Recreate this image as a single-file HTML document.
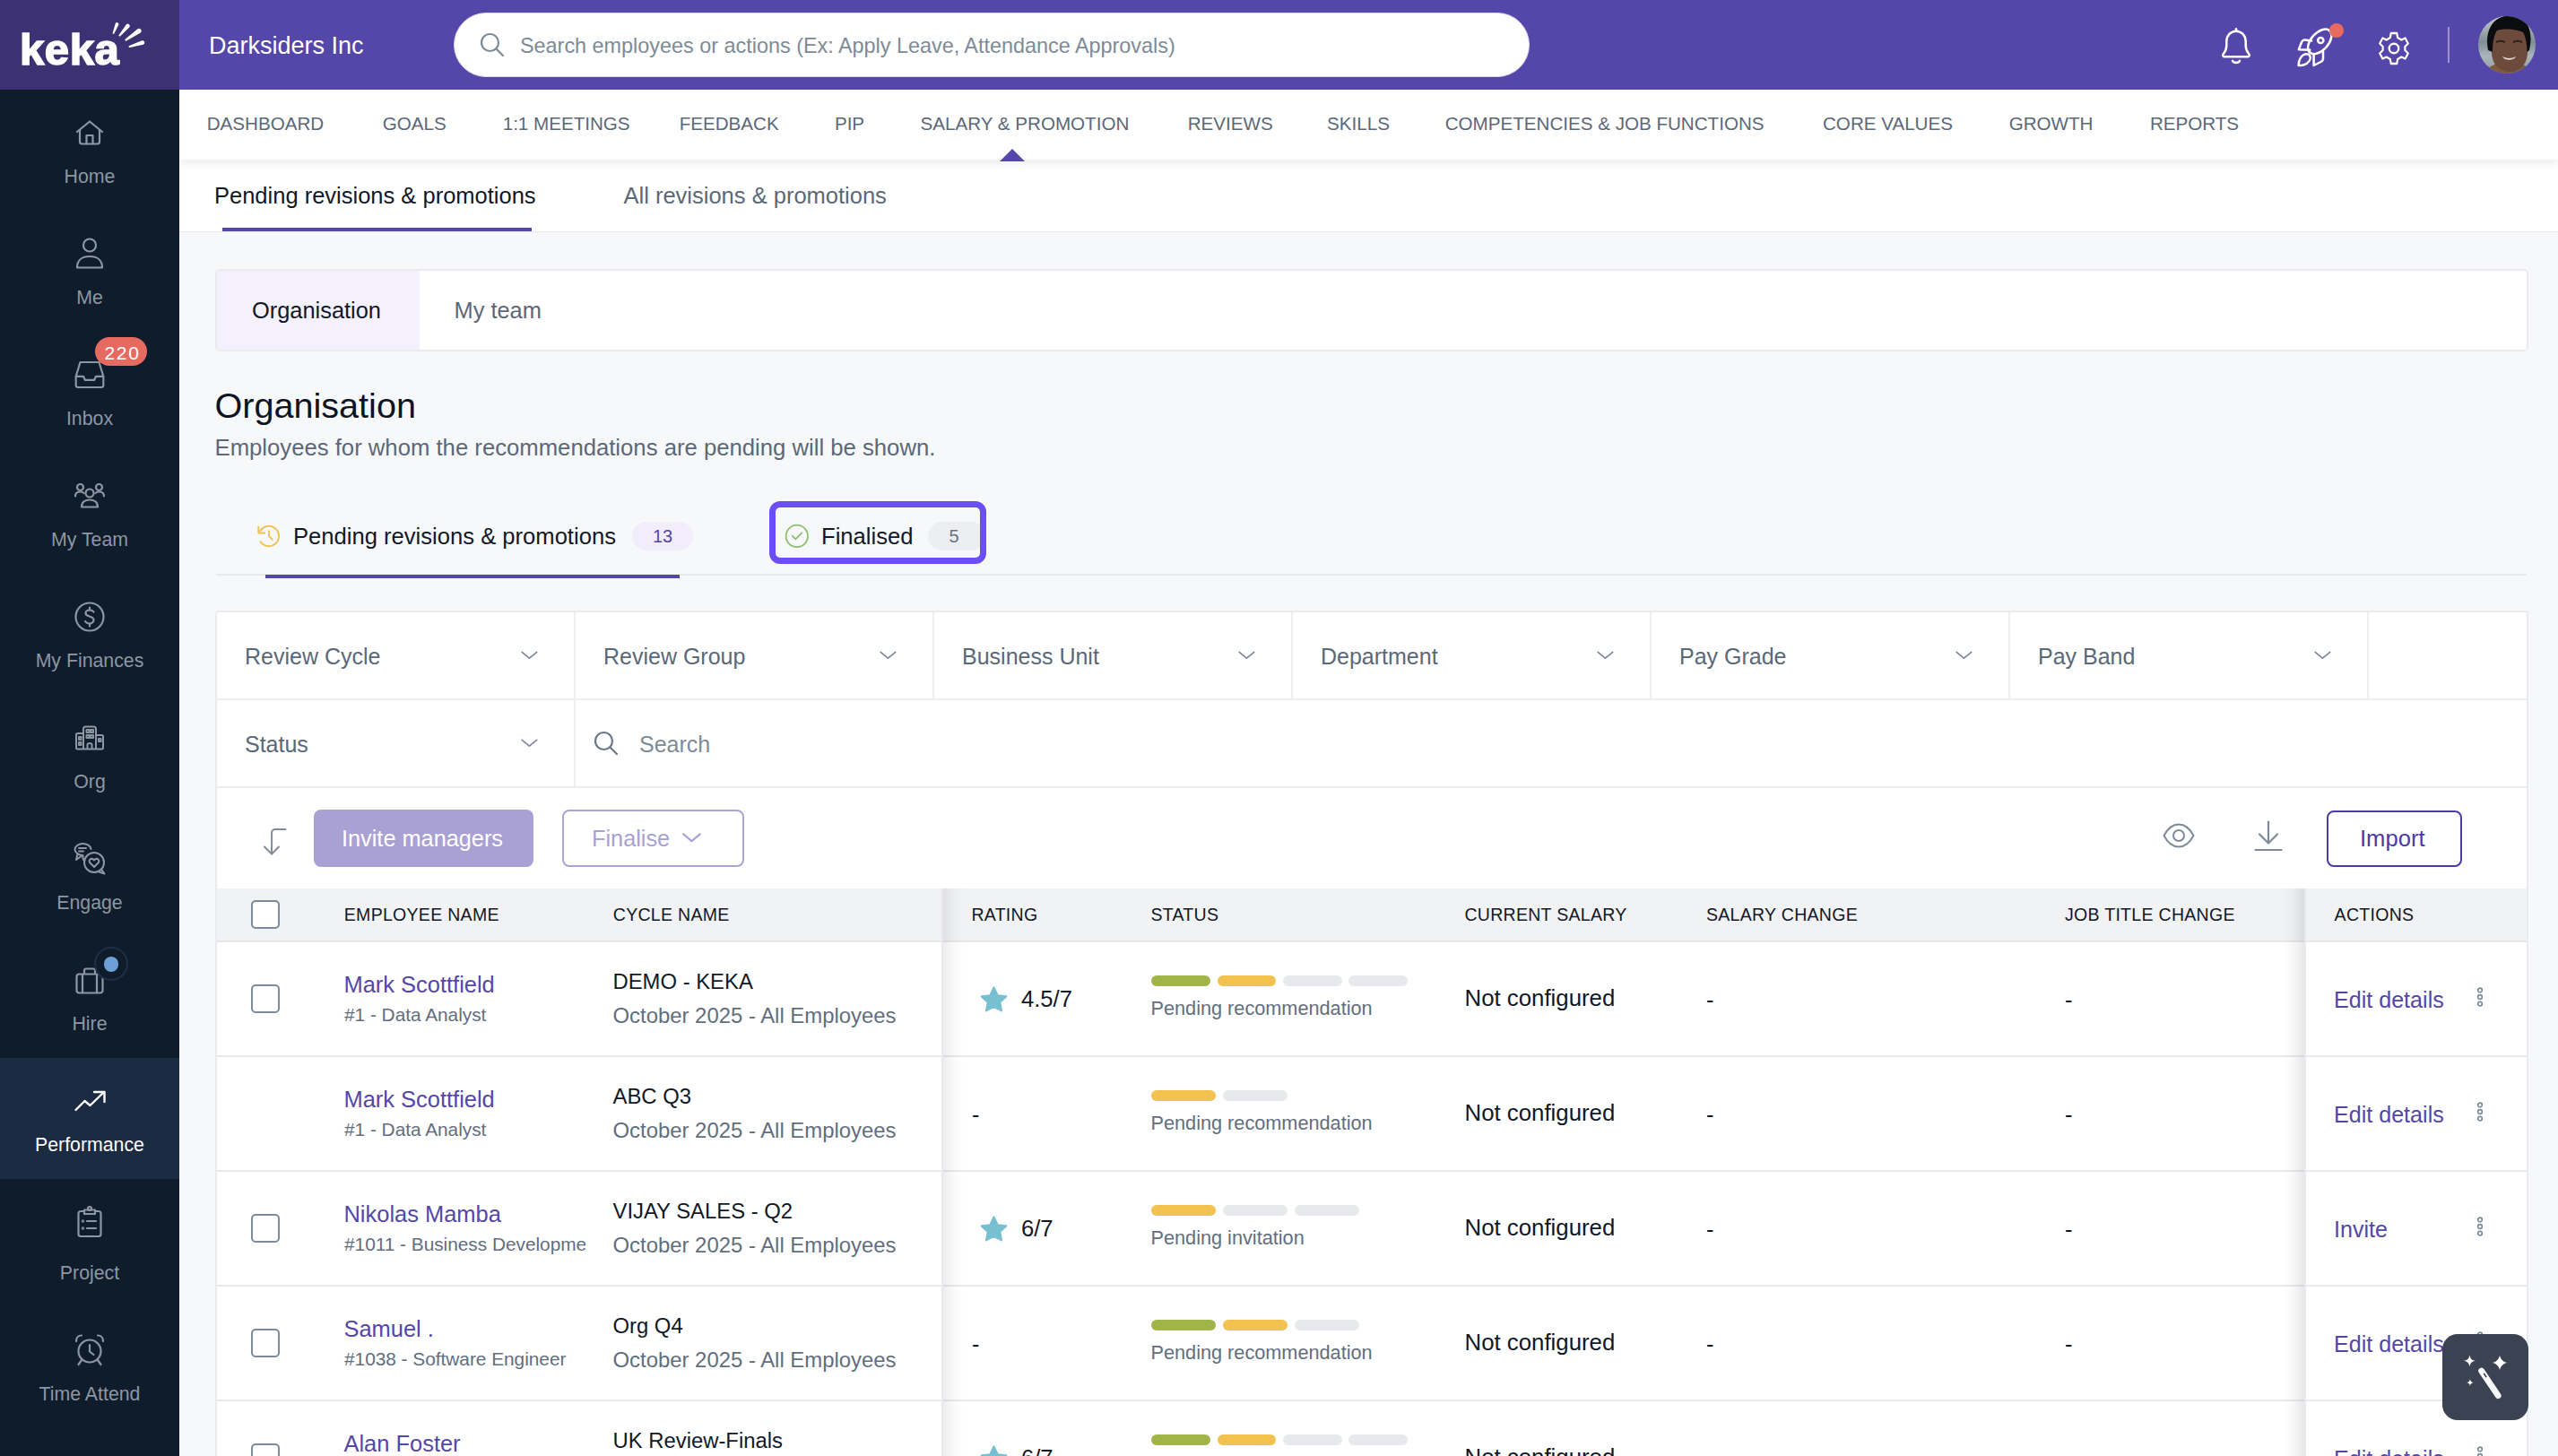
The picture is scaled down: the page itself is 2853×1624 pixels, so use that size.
<!DOCTYPE html>
<html><head><meta charset="utf-8"><title>Keka</title>
<style>
html,body{margin:0;padding:0;}
body{width:2853px;height:1624px;position:relative;overflow:hidden;background:#f7f8fa;font-family:"Liberation Sans", sans-serif;}
.t{position:absolute;white-space:nowrap;line-height:1;}
svg{overflow:visible}
</style></head><body>
<div style="position:absolute;left:0px;top:0px;width:200px;height:100px;background:#3c3173"></div>
<div style="position:absolute;left:200px;top:0px;width:2653px;height:100px;background:#5546a9"></div>
<div class="t" style="left:22.0px;top:30.5px;font-size:49px;color:#ffffff;font-weight:700;letter-spacing:0.6px;-webkit-text-stroke:1.6px #fff;">keka</div>
<svg style="position:absolute;left:0px;top:0px;" width="200" height="100" viewBox="0 0 200 100" fill="none"><path d="M127.34 37.33 L132.26 27.71 A1.9 1.9 0 0 0 128.74 26.29 L125.66 36.67 A0.9 0.9 0 0 0 127.34 37.33 Z" fill="#fff"/><path d="M134.26 40.15 L144.25 30.50 A2.3 2.3 0 0 0 140.75 27.50 L132.74 38.85 A1.0 1.0 0 0 0 134.26 40.15 Z" fill="#fff"/><path d="M141.12 45.41 L156.48 36.64 A2.6 2.6 0 0 0 153.52 32.36 L139.88 43.59 A1.1 1.1 0 0 0 141.12 45.41 Z" fill="#fff"/><path d="M144.80 52.96 L159.68 49.70 A2.3 2.3 0 0 0 158.32 45.30 L144.20 51.04 A1.0 1.0 0 0 0 144.80 52.96 Z" fill="#fff"/></svg>
<div class="t" style="left:233.0px;top:38.3px;font-size:27px;color:#ffffff;">Darksiders Inc</div>
<div style="position:absolute;left:506px;top:14px;width:1200px;height:72px;background:#fff;border-radius:36px;box-sizing:border-box;border:1.5px solid #d9d7ea"></div>
<svg style="position:absolute;left:535px;top:36px;" width="28" height="28" viewBox="0 0 28 28" fill="none"><circle cx="11.5" cy="11.5" r="9.5" stroke="#7d8b99" stroke-width="2.2"/><path d="M18.5 18.5 L26 26" stroke="#7d8b99" stroke-width="2.2" stroke-linecap="round"/></svg>
<div class="t" style="left:580.0px;top:39.6px;font-size:23.4px;color:#7d8b99;">Search employees or actions (Ex: Apply Leave, Attendance Approvals)</div>
<svg style="position:absolute;left:2470px;top:25px;" width="48" height="50" viewBox="0 0 48 50" fill="none"><g stroke="#fff" stroke-width="2.5" stroke-linecap="round" stroke-linejoin="round">
      <path d="M24 7.2 L24 9.8"/>
      <path d="M24 9.8 C18.3 9.8 13.3 14.5 13.3 21 L13.3 25.5 C13.3 29.5 12.3 32 10.2 34.5 L9.6 35.4 C8.7 36.8 9.4 38.2 11.2 38.2 L36.8 38.2 C38.6 38.2 39.3 36.8 38.4 35.4 L37.8 34.5 C35.7 32 34.7 29.5 34.7 25.5 L34.7 21 C34.7 14.5 29.7 9.8 24 9.8 Z"/>
      <path d="M20 42.8 C21.5 45.6 26.5 45.6 28 42.8"/></g></svg>
<svg style="position:absolute;left:2547.5px;top:20px;" width="70" height="60" viewBox="0 0 70 60" fill="none"><g stroke="#fff" stroke-width="2.5" stroke-linecap="round" stroke-linejoin="round">
      <ellipse cx="39.2" cy="26.4" rx="16.4" ry="9.6" transform="rotate(-47.8 39.2 26.4)"/>
      <circle cx="40.3" cy="25" r="3.1"/>
      <path d="M30.2 25.4 L22.5 24.6 C21 24.5 20 25.2 19.3 26.5 L15.8 35.2 L28.3 35.8"/>
      <path d="M32.6 40.5 L32.6 53 L40.5 49 C42.2 48.1 43 47 43 45.3 L43 37.6"/>
      <path d="M15.6 53 C15.8 48 17.5 43.5 21 41.3 C23.8 39.5 27 40 28.3 42.3 C29.5 44.6 28.2 48 25.3 50.4 C22.5 52.5 19 53 15.6 53 Z"/></g></svg>
<div style="position:absolute;left:2598px;top:26px;width:16px;height:16px;background:#e66a60;border-radius:50%"></div>
<svg style="position:absolute;left:2653px;top:35px;" width="34" height="38" viewBox="0 0 34 38" fill="none"><g stroke="#fff" stroke-width="2.4" stroke-linejoin="round">
      <g transform="translate(17 19) scale(0.93 1) translate(-18 -19)"><path d="M14.5 2 L21.5 2 L22.5 7 L27 9.5 L31.5 7.5 L35 13.5 L31.3 17 L31.3 21 L35 24.5 L31.5 30.5 L27 28.5 L22.5 31 L21.5 36 L14.5 36 L13.5 31 L9 28.5 L4.5 30.5 L1 24.5 L4.7 21 L4.7 17 L1 13.5 L4.5 7.5 L9 9.5 L13.5 7 Z"/></g>
      <circle cx="17" cy="19" r="5.3"/></g></svg>
<div style="position:absolute;left:2730px;top:30px;width:2px;height:40px;background:rgba(255,255,255,0.42)"></div>
<svg style="position:absolute;left:2764px;top:18px;" width="64" height="64" viewBox="0 0 64 64" fill="none"><defs><clipPath id="av"><circle cx="32" cy="32" r="32"/></clipPath>
      <linearGradient id="avbg" x1="0" y1="0" x2="0" y2="1"><stop offset="0" stop-color="#c4ccd0"/><stop offset="0.45" stop-color="#7f8e95"/><stop offset="0.7" stop-color="#aab6bc"/><stop offset="1" stop-color="#8d9aa0"/></linearGradient></defs>
      <g clip-path="url(#av)">
      <rect width="64" height="64" fill="url(#avbg)"/>
      <path d="M8 64 C10 57 17 53 24 53 L44 53 C51 53 57 57 59 64 Z" fill="#7d5a3e"/>
      <path d="M15 26 C15 14 23 8 35 8 C47 8 55 14 55 26 L55 40 C55 54 46 62 35 62 C24 62 15 54 15 40 Z" fill="#6d4b3c"/>
      <path d="M11 38 C7 18 15 0 35 -1 C55 -1 62 16 57 38 L54.5 40 C54.5 30 52.5 22 50 18 C43 15 32 13 21 16 C17.5 21 16 30 16 40 Z" fill="#0b0c0e"/>
      <path d="M27 45 C31 47.5 38 47.5 42 45 C40 50 29 50 27 45 Z" fill="#e9dcd5"/>
      <path d="M20 29 C23 27.5 27 27.5 30 29 M39 29 C42 27.5 46 27.5 49 29" stroke="#2e211b" stroke-width="2.2"/>
      </g></svg>
<div style="position:absolute;left:0px;top:100px;width:200px;height:1524px;background:#0f1c2b"></div>
<div style="position:absolute;left:0px;top:1180px;width:200px;height:135px;background:#1b2b42"></div>
<div class="t" style="left:0;width:200px;text-align:center;top:186.5px;font-size:21.3px;color:#8c97a3">Home</div>
<div class="t" style="left:0;width:200px;text-align:center;top:321.5px;font-size:21.3px;color:#8c97a3">Me</div>
<div class="t" style="left:0;width:200px;text-align:center;top:456.5px;font-size:21.3px;color:#8c97a3">Inbox</div>
<div class="t" style="left:0;width:200px;text-align:center;top:591.5px;font-size:21.3px;color:#8c97a3">My Team</div>
<div class="t" style="left:0;width:200px;text-align:center;top:726.5px;font-size:21.3px;color:#8c97a3">My Finances</div>
<div class="t" style="left:0;width:200px;text-align:center;top:861.5px;font-size:21.3px;color:#8c97a3">Org</div>
<div class="t" style="left:0;width:200px;text-align:center;top:996.5px;font-size:21.3px;color:#8c97a3">Engage</div>
<div class="t" style="left:0;width:200px;text-align:center;top:1131.5px;font-size:21.3px;color:#8c97a3">Hire</div>
<div class="t" style="left:0;width:200px;text-align:center;top:1266.5px;font-size:21.3px;color:#ffffff">Performance</div>
<div class="t" style="left:0;width:200px;text-align:center;top:1409.5px;font-size:21.3px;color:#8c97a3">Project</div>
<div class="t" style="left:0;width:200px;text-align:center;top:1544.5px;font-size:21.3px;color:#8c97a3">Time Attend</div>
<svg style="position:absolute;left:84px;top:134px;" width="32" height="28" viewBox="0 0 32 28" fill="none"><g stroke="#8c97a3" stroke-width="2.2" stroke-linecap="round" stroke-linejoin="round"><path d="M2 13 L16 1.5 L30 13"/><path d="M5 11 L5 24 C5 25.5 6 26.5 7.5 26.5 L24.5 26.5 C26 26.5 27 25.5 27 24 L27 11"/><path d="M12.5 26.5 L12.5 17 L19.5 17 L19.5 26.5"/></g></svg>
<svg style="position:absolute;left:84px;top:265px;" width="32" height="36" viewBox="0 0 32 36" fill="none"><g stroke="#8c97a3" stroke-width="2.2" stroke-linecap="round" stroke-linejoin="round"><circle cx="16" cy="8.5" r="7"/><path d="M2 33.5 C2 25 8 21 16 21 C24 21 30 25 30 33.5 Z"/></g></svg>
<svg style="position:absolute;left:83px;top:402px;" width="34" height="32" viewBox="0 0 34 32" fill="none"><g stroke="#8c97a3" stroke-width="2.2" stroke-linecap="round" stroke-linejoin="round"><path d="M6.5 2 L27.5 2 L32.3 17.8 L32.3 27.8 C32.3 29.3 31.3 30 29.8 30 L4.2 30 C2.7 30 1.7 29.3 1.7 27.8 L1.7 17.8 Z"/><path d="M1.7 17.8 L10 17.8 L11.8 21.8 L22.2 21.8 L24 17.8 L32.3 17.8"/></g></svg>
<div style="position:absolute;left:106px;top:376px;width:58px;height:32px;background:#e66a60;border-radius:16px"></div>
<div class="t" style="left:107.5px;width:58px;text-align:center;top:382.5px;font-size:21px;color:#fff;letter-spacing:1.6px">220</div>
<svg style="position:absolute;left:83px;top:539px;" width="34" height="28" viewBox="0 0 34 28" fill="none"><g stroke="#8c97a3" stroke-width="2.2" stroke-linecap="round" stroke-linejoin="round"><circle cx="17" cy="11" r="4.5"/><path d="M8 26.5 C8 21 12 18.5 17 18.5 C22 18.5 26 21 26 26.5 Z"/><circle cx="6.5" cy="4.5" r="3.5"/><circle cx="27.5" cy="4.5" r="3.5"/><path d="M1 14.5 C1 11 3.5 9.5 6.5 9.5 C8 9.5 9.5 10 10.5 11"/><path d="M33 14.5 C33 11 30.5 9.5 27.5 9.5 C26 9.5 24.5 10 23.5 11"/></g></svg>
<svg style="position:absolute;left:83px;top:671px;" width="34" height="34" viewBox="0 0 34 34" fill="none"><g stroke="#8c97a3" stroke-width="2.2" stroke-linecap="round" stroke-linejoin="round"><circle cx="17" cy="17" r="15.5"/><path d="M21.5 11.5 C20.5 10 19 9.5 17 9.5 C14 9.5 12.5 11 12.5 13 C12.5 17.5 21.5 15.5 21.5 20.5 C21.5 22.5 19.5 24.5 17 24.5 C14.5 24.5 13 23.5 12 22"/><path d="M17 6.5 L17 9.5 M17 24.5 L17 27.5"/></g></svg>
<svg style="position:absolute;left:84px;top:809px;" width="32" height="28" viewBox="0 0 32 28" fill="none"><g stroke="#8c97a3" stroke-width="2" stroke-linejoin="round"><path d="M9 26.5 L9 4 C9 2.5 10 1.5 11.5 1.5 L20.5 1.5 C22 1.5 23 2.5 23 4 L23 26.5"/><path d="M9 9 L2.5 9 C1.5 9 1 9.5 1 10.5 L1 25 C1 26 1.5 26.5 2.5 26.5 L29.5 26.5 C30.5 26.5 31 26 31 25 L31 12.5 C31 11.5 30.5 11 29.5 11 L23 11"/><rect x="12.5" y="5" width="3" height="3"/><rect x="17" y="5" width="3" height="3"/><rect x="12.5" y="11" width="3" height="3"/><rect x="17" y="11" width="3" height="3"/><rect x="4" y="13" width="2.5" height="3"/><rect x="4" y="19" width="2.5" height="3"/><rect x="26" y="15" width="2.5" height="3"/><path d="M13.5 26.5 L13.5 21.5 C13.5 19.5 18.5 19.5 18.5 21.5 L18.5 26.5"/></g></svg>
<svg style="position:absolute;left:82px;top:940px;" width="36" height="36" viewBox="0 0 36 36" fill="none"><g stroke="#8c97a3" stroke-width="2" stroke-linejoin="round" stroke-linecap="round"><path d="M12 20 C11 19 10 16.5 10.5 14 C6 14 1.5 11 1.5 7.5 C1.5 4 5.5 1 10.5 1 C15 1 19 3.5 19.5 7 "/><path d="M4.5 12.5 L3 19 L8.5 15"/><path d="M6 6 L14 6 M6 9.5 L11 9.5"/><circle cx="23" cy="22" r="11"/><path d="M31 29.5 L34.5 34.5 L28.5 32.5"/><path d="M23 27 L18.5 22.5 C17 21 17.5 18.5 19.5 18 C21 17.6 22.3 18.5 23 19.5 C23.7 18.5 25 17.6 26.5 18 C28.5 18.5 29 21 27.5 22.5 Z"/></g></svg>
<svg style="position:absolute;left:84px;top:1079px;" width="32" height="30" viewBox="0 0 32 30" fill="none"><g stroke="#8c97a3" stroke-width="2.2" stroke-linejoin="round"><rect x="1.5" y="7.5" width="29" height="21" rx="3"/><path d="M10 7.5 L10 3.5 C10 2.5 10.8 1.5 12 1.5 L20 1.5 C21.2 1.5 22 2.5 22 3.5 L22 7.5"/><path d="M8 7.5 L8 28.5 M24 7.5 L24 28.5"/></g></svg>
<div style="position:absolute;left:107px;top:1058px;width:34px;height:34px;border-radius:50%;background:#0f1c2b;box-shadow:0 0 0 2px #1d3048"></div>
<div style="position:absolute;left:115.5px;top:1067px;width:16.5px;height:16.5px;border-radius:50%;background:#6e9fd6"></div>
<svg style="position:absolute;left:83px;top:1216px;" width="36" height="24" viewBox="0 0 36 24" fill="none"><g stroke="#fff" stroke-width="2.4" stroke-linecap="round" stroke-linejoin="round"><path d="M1.5 22 L11.5 12 L17.5 17 L33 2"/><path d="M22 2 L33.5 2 L33.5 13"/></g></svg>
<svg style="position:absolute;left:86px;top:1345px;" width="28" height="36" viewBox="0 0 28 36" fill="none"><g stroke="#8c97a3" stroke-width="2.2" stroke-linecap="round" stroke-linejoin="round"><path d="M8 6 L4 6 C2.5 6 1.5 7 1.5 8.5 L1.5 31.5 C1.5 33 2.5 34 4 34 L24 34 C25.5 34 26.5 33 26.5 31.5 L26.5 8.5 C26.5 7 25.5 6 24 6 L20 6"/><path d="M8 4.5 L20 4.5 L20 9 L8 9 Z"/><circle cx="14" cy="3" r="2"/><path d="M11 17 L21 17 M11 25 L21 25"/><circle cx="6.5" cy="17" r="0.6"/><circle cx="6.5" cy="25" r="0.6"/></g></svg>
<svg style="position:absolute;left:83px;top:1488px;" width="36" height="36" viewBox="0 0 36 36" fill="none"><g stroke="#8c97a3" stroke-width="2.2" stroke-linecap="round" stroke-linejoin="round"><circle cx="17" cy="19" r="12.5"/><path d="M17 12 L17 19.5 L21.5 23"/><path d="M2 8 C2 4 4.5 1.5 8 1.5 M32 8 C32 4 29.5 1.5 26 1.5"/><path d="M8 29 L4.5 34 M26 29 L29.5 34"/></g></svg>
<div style="position:absolute;left:200px;top:100px;width:2653px;height:158px;background:#fff"></div>
<div style="position:absolute;left:200px;top:258px;width:2653px;height:1px;background:#e5e7eb"></div>
<div style="position:absolute;left:200px;top:170px;width:2653px;height:8px;background:#fff;box-shadow:0 4px 10px rgba(0,0,0,0.09)"></div>
<div style="position:absolute;left:200px;top:100px;width:2653px;height:78px;background:#fff"></div>
<div class="t" style="left:230.7px;top:127.6px;font-size:20.6px;color:#5b6879;">DASHBOARD</div>
<div class="t" style="left:426.8px;top:127.6px;font-size:20.6px;color:#5b6879;">GOALS</div>
<div class="t" style="left:560.7px;top:127.6px;font-size:20.6px;color:#5b6879;">1:1 MEETINGS</div>
<div class="t" style="left:757.7px;top:127.6px;font-size:20.6px;color:#5b6879;">FEEDBACK</div>
<div class="t" style="left:930.9px;top:127.6px;font-size:20.6px;color:#5b6879;">PIP</div>
<div class="t" style="left:1026.6px;top:127.6px;font-size:20.6px;color:#5b6879;">SALARY &amp; PROMOTION</div>
<div class="t" style="left:1324.7px;top:127.6px;font-size:20.6px;color:#5b6879;">REVIEWS</div>
<div class="t" style="left:1480.1px;top:127.6px;font-size:20.6px;color:#5b6879;">SKILLS</div>
<div class="t" style="left:1611.7px;top:127.6px;font-size:20.6px;color:#5b6879;">COMPETENCIES &amp; JOB FUNCTIONS</div>
<div class="t" style="left:2033.0px;top:127.6px;font-size:20.6px;color:#5b6879;">CORE VALUES</div>
<div class="t" style="left:2240.7px;top:127.6px;font-size:20.6px;color:#5b6879;">GROWTH</div>
<div class="t" style="left:2397.9px;top:127.6px;font-size:20.6px;color:#5b6879;">REPORTS</div>
<svg style="position:absolute;left:1115px;top:166px;" width="28" height="14" viewBox="0 0 28 14" fill="none"><path d="M0 14 L14 0 L28 14 Z" fill="#5546a9"/></svg>
<div class="t" style="left:239.0px;top:206.4px;font-size:25.5px;color:#111827;">Pending revisions &amp; promotions</div>
<div class="t" style="left:695.5px;top:206.4px;font-size:25.5px;color:#5b6879;">All revisions &amp; promotions</div>
<div style="position:absolute;left:248px;top:254px;width:345px;height:4px;background:#5546a9"></div>
<div style="position:absolute;left:240px;top:300px;width:2580px;height:92px;background:#fff;border:2px solid #eaebee;border-radius:5px;box-sizing:border-box"></div>
<div style="position:absolute;left:242px;top:302px;width:226px;height:88px;background:#f4f1fc;border-radius:3px 0 0 3px"></div>
<div class="t" style="left:281.0px;top:334.0px;font-size:25.4px;color:#111827;">Organisation</div>
<div class="t" style="left:506.5px;top:334.0px;font-size:25.4px;color:#5b6879;">My team</div>
<div class="t" style="left:239.5px;top:432.5px;font-size:39.6px;color:#0d1421;">Organisation</div>
<div class="t" style="left:239.5px;top:487.2px;font-size:25.7px;color:#5b6879;">Employees for whom the recommendations are pending will be shown.</div>
<div style="position:absolute;left:241px;top:640px;width:2577px;height:2px;background:#e7e9ec"></div>
<div style="position:absolute;left:296px;top:641px;width:462px;height:4px;background:#5546a9"></div>
<svg style="position:absolute;left:280px;top:575px;" width="40" height="40" viewBox="0 0 40 40" fill="none"><g stroke="#f1c04f" stroke-width="1.85" stroke-linecap="round" stroke-linejoin="round"><path d="M10.2 17.3 A11.2 11.2 0 1 1 10.6 29.3"/><path d="M8.3 12.6 L8.3 19.5 L15.1 19.5"/><path d="M19.9 17.3 L19.9 22.9 L23.8 26.9"/></g></svg>
<div class="t" style="left:327.0px;top:586.3px;font-size:25.6px;color:#111827;">Pending revisions &amp; promotions</div>
<div style="position:absolute;left:705px;top:582px;width:68px;height:32px;background:#f1edfb;border-radius:16px"></div>
<div class="t" style="left:705px;width:68px;text-align:center;top:588.1px;font-size:20px;color:#5546a9">13</div>
<svg style="position:absolute;left:865px;top:575px;" width="40" height="40" viewBox="0 0 40 40" fill="none"><circle cx="23.8" cy="22.9" r="12.2" stroke="#8cc06c" stroke-width="1.75"/><path d="M18.6 22.6 L22.3 26.3 L29.3 19.4" stroke="#8cc06c" stroke-width="1.75" stroke-linecap="round" stroke-linejoin="round"/></svg>
<div class="t" style="left:916.0px;top:586.3px;font-size:25.6px;color:#111827;">Finalised</div>
<div style="position:absolute;left:1035px;top:582px;width:64px;height:32px;background:#eceef1;border-radius:16px"></div>
<div class="t" style="left:1035px;width:58px;text-align:center;top:588.1px;font-size:20px;color:#677385">5</div>
<div style="position:absolute;left:858px;top:559px;width:242px;height:70px;border:7px solid #6b4ef6;border-radius:12px;box-sizing:border-box"></div>
<div style="position:absolute;left:240px;top:681px;width:2580px;height:1200px;background:#fff;border:2px solid #eaebee;border-radius:4px;box-sizing:border-box"></div>
<div style="position:absolute;left:241px;top:779px;width:2577px;height:2px;background:#eceef0"></div>
<div style="position:absolute;left:241px;top:877px;width:2577px;height:2px;background:#eceef0"></div>
<div style="position:absolute;left:640px;top:682px;width:2px;height:98px;background:#eceef0"></div>
<div style="position:absolute;left:1040px;top:682px;width:2px;height:98px;background:#eceef0"></div>
<div style="position:absolute;left:1440px;top:682px;width:2px;height:98px;background:#eceef0"></div>
<div style="position:absolute;left:1840px;top:682px;width:2px;height:98px;background:#eceef0"></div>
<div style="position:absolute;left:2240px;top:682px;width:2px;height:98px;background:#eceef0"></div>
<div style="position:absolute;left:2640px;top:682px;width:2px;height:98px;background:#eceef0"></div>
<div style="position:absolute;left:640px;top:780px;width:2px;height:98px;background:#eceef0"></div>
<div class="t" style="left:273.0px;top:719.8px;font-size:25px;color:#5b6879;">Review Cycle</div>
<svg style="position:absolute;left:581px;top:725px;" width="19" height="11" viewBox="0 0 19 11" fill="none"><path d="M1.2 2.3 L9.4 9.2 L17.7 2.3" stroke="#7d8a9b" stroke-width="1.7" stroke-linecap="round" stroke-linejoin="round"/></svg>
<div class="t" style="left:673.0px;top:719.8px;font-size:25px;color:#5b6879;">Review Group</div>
<svg style="position:absolute;left:981px;top:725px;" width="19" height="11" viewBox="0 0 19 11" fill="none"><path d="M1.2 2.3 L9.4 9.2 L17.7 2.3" stroke="#7d8a9b" stroke-width="1.7" stroke-linecap="round" stroke-linejoin="round"/></svg>
<div class="t" style="left:1073.0px;top:719.8px;font-size:25px;color:#5b6879;">Business Unit</div>
<svg style="position:absolute;left:1381px;top:725px;" width="19" height="11" viewBox="0 0 19 11" fill="none"><path d="M1.2 2.3 L9.4 9.2 L17.7 2.3" stroke="#7d8a9b" stroke-width="1.7" stroke-linecap="round" stroke-linejoin="round"/></svg>
<div class="t" style="left:1473.0px;top:719.8px;font-size:25px;color:#5b6879;">Department</div>
<svg style="position:absolute;left:1781px;top:725px;" width="19" height="11" viewBox="0 0 19 11" fill="none"><path d="M1.2 2.3 L9.4 9.2 L17.7 2.3" stroke="#7d8a9b" stroke-width="1.7" stroke-linecap="round" stroke-linejoin="round"/></svg>
<div class="t" style="left:1873.0px;top:719.8px;font-size:25px;color:#5b6879;">Pay Grade</div>
<svg style="position:absolute;left:2181px;top:725px;" width="19" height="11" viewBox="0 0 19 11" fill="none"><path d="M1.2 2.3 L9.4 9.2 L17.7 2.3" stroke="#7d8a9b" stroke-width="1.7" stroke-linecap="round" stroke-linejoin="round"/></svg>
<div class="t" style="left:2273.0px;top:719.8px;font-size:25px;color:#5b6879;">Pay Band</div>
<svg style="position:absolute;left:2581px;top:725px;" width="19" height="11" viewBox="0 0 19 11" fill="none"><path d="M1.2 2.3 L9.4 9.2 L17.7 2.3" stroke="#7d8a9b" stroke-width="1.7" stroke-linecap="round" stroke-linejoin="round"/></svg>
<div class="t" style="left:273.0px;top:818.2px;font-size:25px;color:#5b6879;">Status</div>
<svg style="position:absolute;left:581px;top:823px;" width="19" height="11" viewBox="0 0 19 11" fill="none"><path d="M1.2 2.3 L9.4 9.2 L17.7 2.3" stroke="#7d8a9b" stroke-width="1.7" stroke-linecap="round" stroke-linejoin="round"/></svg>
<svg style="position:absolute;left:662px;top:815px;" width="28" height="28" viewBox="0 0 28 28" fill="none"><circle cx="11.5" cy="11.5" r="9.5" stroke="#6b7888" stroke-width="2.2"/><path d="M18.5 18.5 L26 26" stroke="#6b7888" stroke-width="2.2" stroke-linecap="round"/></svg>
<div class="t" style="left:713.0px;top:818.2px;font-size:25px;color:#7d8b99;">Search</div>
<svg style="position:absolute;left:293px;top:923px;" width="28" height="32" viewBox="0 0 28 32" fill="none"><g stroke="#7f8b9b" stroke-width="1.9" stroke-linecap="round" stroke-linejoin="round"><path d="M25.5 2 L14 2 C11.5 2 10 3.5 10 6 L10 29.5"/><path d="M2 21.5 L10 29.5 L18 21.5"/></g></svg>
<div style="position:absolute;left:350px;top:903px;width:245px;height:64px;background:#a9a1d4;border-radius:8px"></div>
<div class="t" style="left:381.0px;top:922.6px;font-size:25.3px;color:#ffffff;">Invite managers</div>
<div style="position:absolute;left:627px;top:903px;width:203px;height:64px;border:2px solid #aaa3d6;border-radius:8px;box-sizing:border-box;background:#fff"></div>
<div class="t" style="left:660.0px;top:922.6px;font-size:25.3px;color:#a9a1d4;">Finalise</div>
<svg style="position:absolute;left:761px;top:928px;" width="21" height="12" viewBox="0 0 21 12" fill="none"><path d="M1.2 2.3 L10.4 10.2 L19.7 2.3" stroke="#a9a1d4" stroke-width="2.2" stroke-linecap="round" stroke-linejoin="round"/></svg>
<svg style="position:absolute;left:2412px;top:918px;" width="36" height="28" viewBox="0 0 36 28" fill="none"><g stroke="#7d8a99" stroke-width="2"><path d="M1.5 14 C6 5.5 11.5 1.5 18 1.5 C24.5 1.5 30 5.5 34.5 14 C30 22.5 24.5 26.5 18 26.5 C11.5 26.5 6 22.5 1.5 14 Z"/><circle cx="18" cy="14" r="6"/></g></svg>
<svg style="position:absolute;left:2514px;top:915px;" width="32" height="36" viewBox="0 0 32 36" fill="none"><g stroke="#7d8a99" stroke-width="2.2" stroke-linecap="round" stroke-linejoin="round"><path d="M16 1.5 L16 25"/><path d="M6 15.5 L16 25.5 L26 15.5"/><path d="M1.5 33 L30.5 33"/></g></svg>
<div style="position:absolute;left:2595px;top:904px;width:151px;height:63px;border:2px solid #4b3ba6;border-radius:8px;box-sizing:border-box;background:#fff"></div>
<div class="t" style="left:2632.0px;top:923.3px;font-size:25.6px;color:#4b3ba6;">Import</div>
<div style="position:absolute;left:242px;top:991px;width:2576px;height:60px;background:#f1f2f4"></div>
<div style="position:absolute;left:242px;top:1049px;width:2576px;height:2px;background:#e6e7ea"></div>
<div style="position:absolute;left:280px;top:1004px;width:32px;height:32px;border:2px solid #7d8a9b;border-radius:5px;box-sizing:border-box;background:#fff"></div>
<div class="t" style="left:383.8px;top:1010.5px;font-size:19.5px;color:#111827;letter-spacing:0.3px;">EMPLOYEE NAME</div>
<div class="t" style="left:683.8px;top:1010.5px;font-size:19.5px;color:#111827;letter-spacing:0.3px;">CYCLE NAME</div>
<div class="t" style="left:1083.4px;top:1010.5px;font-size:19.5px;color:#111827;letter-spacing:0.3px;">RATING</div>
<div class="t" style="left:1283.4px;top:1010.5px;font-size:19.5px;color:#111827;letter-spacing:0.3px;">STATUS</div>
<div class="t" style="left:1633.4px;top:1010.5px;font-size:19.5px;color:#111827;letter-spacing:0.3px;">CURRENT SALARY</div>
<div class="t" style="left:1903.0px;top:1010.5px;font-size:19.5px;color:#111827;letter-spacing:0.3px;">SALARY CHANGE</div>
<div class="t" style="left:2303.0px;top:1010.5px;font-size:19.5px;color:#111827;letter-spacing:0.3px;">JOB TITLE CHANGE</div>
<div class="t" style="left:2603.6px;top:1010.5px;font-size:19.5px;color:#111827;letter-spacing:0.3px;">ACTIONS</div>
<div style="position:absolute;left:242px;top:1051px;width:2576px;height:128px;background:#fff"></div>
<div style="position:absolute;left:280px;top:1098px;width:32px;height:32px;border:2px solid #7d8a9b;border-radius:5px;box-sizing:border-box;background:#fff"></div>
<div class="t" style="left:383.5px;top:1086.1px;font-size:25.45px;color:#5546a9;">Mark Scottfield</div>
<div class="t" style="left:384.0px;top:1122.4px;font-size:20.8px;color:#626e7e;">#1 - Data Analyst</div>
<div class="t" style="left:683.5px;top:1082.8px;font-size:23.85px;color:#111827;">DEMO - KEKA</div>
<div class="t" style="left:683.5px;top:1121.4px;font-size:23.9px;color:#626e7e;">October 2025 - All Employees</div>
<svg style="position:absolute;left:1092.7px;top:1099.8px;" width="31" height="30" viewBox="0 0 31 30" fill="none"><path d="M15.5 1.5 L19.7 10.3 L29.2 11.4 L22.2 17.9 L24 27.4 L15.5 22.7 L7 27.4 L8.8 17.9 L1.8 11.4 L11.3 10.3 Z" fill="#76c0d1" stroke="#76c0d1" stroke-width="2.2" stroke-linejoin="round"/></svg>
<div class="t" style="left:1139.0px;top:1102.3px;font-size:25.6px;color:#111827;">4.5/7</div>
<div style="position:absolute;left:1284.4px;top:1088px;width:65.5px;height:12px;background:#a0b44a;border-radius:6px"></div>
<div style="position:absolute;left:1357.7px;top:1088px;width:65.5px;height:12px;background:#f2c14e;border-radius:6px"></div>
<div style="position:absolute;left:1431.0px;top:1088px;width:65.5px;height:12px;background:#e8e9ec;border-radius:6px"></div>
<div style="position:absolute;left:1504.3px;top:1088px;width:65.5px;height:12px;background:#e8e9ec;border-radius:6px"></div>
<div class="t" style="left:1283.5px;top:1113.6px;font-size:21.7px;color:#626e7e;">Pending recommendation</div>
<div class="t" style="left:1633.5px;top:1101.4px;font-size:25.8px;color:#111827;">Not configured</div>
<div class="t" style="left:1903.0px;top:1102.6px;font-size:25.3px;color:#111827;">-</div>
<div class="t" style="left:2303.0px;top:1102.6px;font-size:25.3px;color:#111827;">-</div>
<div class="t" style="left:2603.0px;top:1102.7px;font-size:25.1px;color:#5546a9;">Edit details</div>
<svg style="position:absolute;left:2761px;top:1100px;" width="10" height="24" viewBox="0 0 10 24" fill="none"><g stroke="#7d8a9b" stroke-width="1.7"><circle cx="5" cy="4.4" r="2.35"/><circle cx="5" cy="12" r="2.35"/><circle cx="5" cy="19.6" r="2.35"/></g></svg>
<div style="position:absolute;left:242px;top:1179px;width:2576px;height:128px;background:#fff"></div>
<div style="position:absolute;left:242px;top:1177px;width:2576px;height:2px;background:#e8e9ec"></div>
<div class="t" style="left:383.5px;top:1214.1px;font-size:25.45px;color:#5546a9;">Mark Scottfield</div>
<div class="t" style="left:384.0px;top:1250.4px;font-size:20.8px;color:#626e7e;">#1 - Data Analyst</div>
<div class="t" style="left:683.5px;top:1210.8px;font-size:23.85px;color:#111827;">ABC Q3</div>
<div class="t" style="left:683.5px;top:1249.4px;font-size:23.9px;color:#626e7e;">October 2025 - All Employees</div>
<div class="t" style="left:1084.0px;top:1230.7px;font-size:25.2px;color:#111827;">-</div>
<div style="position:absolute;left:1284.4px;top:1216px;width:72px;height:12px;background:#f2c14e;border-radius:6px"></div>
<div style="position:absolute;left:1364.2px;top:1216px;width:72px;height:12px;background:#e8e9ec;border-radius:6px"></div>
<div class="t" style="left:1283.5px;top:1241.6px;font-size:21.7px;color:#626e7e;">Pending recommendation</div>
<div class="t" style="left:1633.5px;top:1229.4px;font-size:25.8px;color:#111827;">Not configured</div>
<div class="t" style="left:1903.0px;top:1230.6px;font-size:25.3px;color:#111827;">-</div>
<div class="t" style="left:2303.0px;top:1230.6px;font-size:25.3px;color:#111827;">-</div>
<div class="t" style="left:2603.0px;top:1230.7px;font-size:25.1px;color:#5546a9;">Edit details</div>
<svg style="position:absolute;left:2761px;top:1228px;" width="10" height="24" viewBox="0 0 10 24" fill="none"><g stroke="#7d8a9b" stroke-width="1.7"><circle cx="5" cy="4.4" r="2.35"/><circle cx="5" cy="12" r="2.35"/><circle cx="5" cy="19.6" r="2.35"/></g></svg>
<div style="position:absolute;left:242px;top:1307px;width:2576px;height:128px;background:#fff"></div>
<div style="position:absolute;left:242px;top:1305px;width:2576px;height:2px;background:#e8e9ec"></div>
<div style="position:absolute;left:280px;top:1354px;width:32px;height:32px;border:2px solid #7d8a9b;border-radius:5px;box-sizing:border-box;background:#fff"></div>
<div class="t" style="left:383.5px;top:1342.1px;font-size:25.45px;color:#5546a9;">Nikolas Mamba</div>
<div class="t" style="left:384.0px;top:1378.4px;font-size:20.8px;color:#626e7e;">#1011 - Business Developme</div>
<div class="t" style="left:683.5px;top:1338.8px;font-size:23.85px;color:#111827;">VIJAY SALES - Q2</div>
<div class="t" style="left:683.5px;top:1377.4px;font-size:23.9px;color:#626e7e;">October 2025 - All Employees</div>
<svg style="position:absolute;left:1092.7px;top:1355.8px;" width="31" height="30" viewBox="0 0 31 30" fill="none"><path d="M15.5 1.5 L19.7 10.3 L29.2 11.4 L22.2 17.9 L24 27.4 L15.5 22.7 L7 27.4 L8.8 17.9 L1.8 11.4 L11.3 10.3 Z" fill="#76c0d1" stroke="#76c0d1" stroke-width="2.2" stroke-linejoin="round"/></svg>
<div class="t" style="left:1139.0px;top:1358.3px;font-size:25.6px;color:#111827;">6/7</div>
<div style="position:absolute;left:1284.4px;top:1344px;width:72px;height:12px;background:#f2c14e;border-radius:6px"></div>
<div style="position:absolute;left:1364.2px;top:1344px;width:72px;height:12px;background:#e8e9ec;border-radius:6px"></div>
<div style="position:absolute;left:1444.0px;top:1344px;width:72px;height:12px;background:#e8e9ec;border-radius:6px"></div>
<div class="t" style="left:1283.5px;top:1369.6px;font-size:21.7px;color:#626e7e;">Pending invitation</div>
<div class="t" style="left:1633.5px;top:1357.4px;font-size:25.8px;color:#111827;">Not configured</div>
<div class="t" style="left:1903.0px;top:1358.6px;font-size:25.3px;color:#111827;">-</div>
<div class="t" style="left:2303.0px;top:1358.6px;font-size:25.3px;color:#111827;">-</div>
<div class="t" style="left:2603.0px;top:1358.7px;font-size:25.1px;color:#5546a9;">Invite</div>
<svg style="position:absolute;left:2761px;top:1356px;" width="10" height="24" viewBox="0 0 10 24" fill="none"><g stroke="#7d8a9b" stroke-width="1.7"><circle cx="5" cy="4.4" r="2.35"/><circle cx="5" cy="12" r="2.35"/><circle cx="5" cy="19.6" r="2.35"/></g></svg>
<div style="position:absolute;left:242px;top:1435px;width:2576px;height:128px;background:#fff"></div>
<div style="position:absolute;left:242px;top:1433px;width:2576px;height:2px;background:#e8e9ec"></div>
<div style="position:absolute;left:280px;top:1482px;width:32px;height:32px;border:2px solid #7d8a9b;border-radius:5px;box-sizing:border-box;background:#fff"></div>
<div class="t" style="left:383.5px;top:1470.1px;font-size:25.45px;color:#5546a9;">Samuel .</div>
<div class="t" style="left:384.0px;top:1506.4px;font-size:20.8px;color:#626e7e;">#1038 - Software Engineer</div>
<div class="t" style="left:683.5px;top:1466.8px;font-size:23.85px;color:#111827;">Org Q4</div>
<div class="t" style="left:683.5px;top:1505.4px;font-size:23.9px;color:#626e7e;">October 2025 - All Employees</div>
<div class="t" style="left:1084.0px;top:1486.7px;font-size:25.2px;color:#111827;">-</div>
<div style="position:absolute;left:1284.4px;top:1472px;width:72px;height:12px;background:#a0b44a;border-radius:6px"></div>
<div style="position:absolute;left:1364.2px;top:1472px;width:72px;height:12px;background:#f2c14e;border-radius:6px"></div>
<div style="position:absolute;left:1444.0px;top:1472px;width:72px;height:12px;background:#e8e9ec;border-radius:6px"></div>
<div class="t" style="left:1283.5px;top:1497.6px;font-size:21.7px;color:#626e7e;">Pending recommendation</div>
<div class="t" style="left:1633.5px;top:1485.4px;font-size:25.8px;color:#111827;">Not configured</div>
<div class="t" style="left:1903.0px;top:1486.6px;font-size:25.3px;color:#111827;">-</div>
<div class="t" style="left:2303.0px;top:1486.6px;font-size:25.3px;color:#111827;">-</div>
<div class="t" style="left:2603.0px;top:1486.7px;font-size:25.1px;color:#5546a9;">Edit details</div>
<svg style="position:absolute;left:2761px;top:1484px;" width="10" height="24" viewBox="0 0 10 24" fill="none"><g stroke="#7d8a9b" stroke-width="1.7"><circle cx="5" cy="4.4" r="2.35"/><circle cx="5" cy="12" r="2.35"/><circle cx="5" cy="19.6" r="2.35"/></g></svg>
<div style="position:absolute;left:242px;top:1563px;width:2576px;height:128px;background:#fff"></div>
<div style="position:absolute;left:242px;top:1561px;width:2576px;height:2px;background:#e8e9ec"></div>
<div style="position:absolute;left:280px;top:1610px;width:32px;height:32px;border:2px solid #7d8a9b;border-radius:5px;box-sizing:border-box;background:#fff"></div>
<div class="t" style="left:383.5px;top:1598.1px;font-size:25.45px;color:#5546a9;">Alan Foster</div>
<div class="t" style="left:683.5px;top:1594.8px;font-size:23.85px;color:#111827;">UK Review-Finals</div>
<div class="t" style="left:683.5px;top:1633.4px;font-size:23.9px;color:#626e7e;">October 2025 - All Employees</div>
<svg style="position:absolute;left:1092.7px;top:1611.8px;" width="31" height="30" viewBox="0 0 31 30" fill="none"><path d="M15.5 1.5 L19.7 10.3 L29.2 11.4 L22.2 17.9 L24 27.4 L15.5 22.7 L7 27.4 L8.8 17.9 L1.8 11.4 L11.3 10.3 Z" fill="#76c0d1" stroke="#76c0d1" stroke-width="2.2" stroke-linejoin="round"/></svg>
<div class="t" style="left:1139.0px;top:1614.3px;font-size:25.6px;color:#111827;">6/7</div>
<div style="position:absolute;left:1284.4px;top:1600px;width:65.5px;height:12px;background:#a0b44a;border-radius:6px"></div>
<div style="position:absolute;left:1357.7px;top:1600px;width:65.5px;height:12px;background:#f2c14e;border-radius:6px"></div>
<div style="position:absolute;left:1431.0px;top:1600px;width:65.5px;height:12px;background:#e8e9ec;border-radius:6px"></div>
<div style="position:absolute;left:1504.3px;top:1600px;width:65.5px;height:12px;background:#e8e9ec;border-radius:6px"></div>
<div class="t" style="left:1283.5px;top:1625.6px;font-size:21.7px;color:#626e7e;">Pending recommendation</div>
<div class="t" style="left:1633.5px;top:1613.4px;font-size:25.8px;color:#111827;">Not configured</div>
<div class="t" style="left:1903.0px;top:1614.6px;font-size:25.3px;color:#111827;">-</div>
<div class="t" style="left:2303.0px;top:1614.6px;font-size:25.3px;color:#111827;">-</div>
<div class="t" style="left:2603.0px;top:1614.7px;font-size:25.1px;color:#5546a9;">Edit details</div>
<svg style="position:absolute;left:2761px;top:1612px;" width="10" height="24" viewBox="0 0 10 24" fill="none"><g stroke="#7d8a9b" stroke-width="1.7"><circle cx="5" cy="4.4" r="2.35"/><circle cx="5" cy="12" r="2.35"/><circle cx="5" cy="19.6" r="2.35"/></g></svg>
<div style="position:absolute;left:1050px;top:991px;width:2px;height:633px;background:#e8e9ec"></div>
<div style="position:absolute;left:1052px;top:991px;width:24px;height:633px;background:linear-gradient(to right, rgba(0,0,0,0.07), rgba(0,0,0,0.02) 50%, rgba(0,0,0,0))"></div>
<div style="position:absolute;left:2570px;top:991px;width:2px;height:633px;background:#e8e9ec"></div>
<div style="position:absolute;left:2546px;top:991px;width:24px;height:633px;background:linear-gradient(to left, rgba(0,0,0,0.09), rgba(0,0,0,0.03) 50%, rgba(0,0,0,0))"></div>
<div style="position:absolute;left:2820px;top:681px;width:33px;height:943px;background:#f7f8fa"></div>
<div style="position:absolute;left:2818px;top:681px;width:2px;height:943px;background:#eaebee"></div>
<div style="position:absolute;left:2724px;top:1488px;width:96px;height:96px;background:#3b4252;border-radius:17px"></div>
<svg style="position:absolute;left:2724px;top:1488px;" width="96" height="96" viewBox="0 0 96 96" fill="none"><path d="M30.4 23.4 Q31.168 29.032 36.8 29.8 Q31.168 30.568 30.4 36.2 Q29.631999999999998 30.568 24.0 29.8 Q29.631999999999998 29.032 30.4 23.4 Z" fill="#fff"/><path d="M64 24 Q65.6 30.4 72 32 Q65.6 33.6 64 40 Q62.4 33.6 56 32 Q62.4 30.4 64 24 Z" fill="#fff"/><path d="M30.9 50.2 Q31.368 53.632000000000005 34.8 54.1 Q31.368 54.568 30.9 58.0 Q30.432 54.568 27.0 54.1 Q30.432 53.632000000000005 30.9 50.2 Z" fill="#fff"/><path d="M43.6 41 L62.2 68.6" stroke="#f8f9fb" stroke-width="6.8" stroke-linecap="round"/><path d="M46.5 44.3 L48.8 47.6" stroke="#3a4150" stroke-width="1.6" stroke-linecap="round"/></svg>
</body></html>
